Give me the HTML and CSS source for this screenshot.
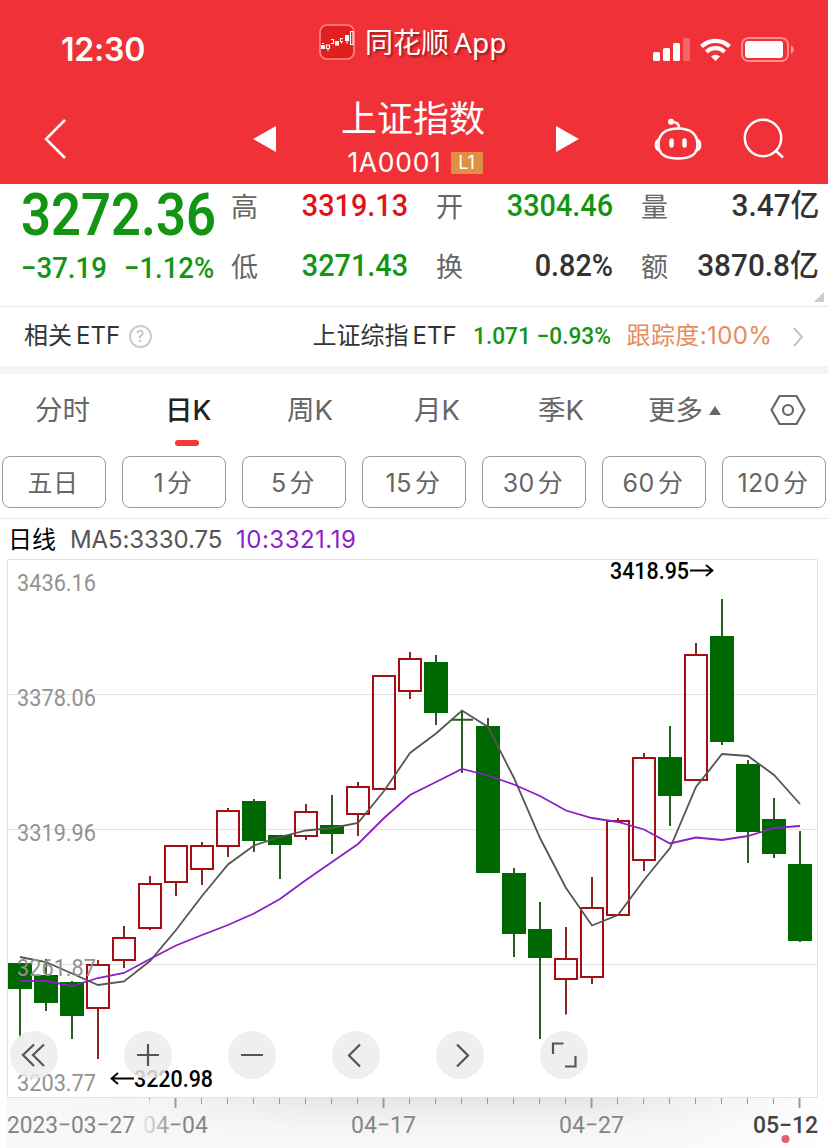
FILE: index.html
```html
<!DOCTYPE html>
<html lang="zh-CN">
<head>
    <meta charset="UTF-8">
    <meta name="viewport" content="width=device-width, initial-scale=1.0">
    <title>上证指数</title>
    <link rel="stylesheet" href="styles.css">
</head>
<body>
    <header>
        <div class="status-bar">
            <span class="time">12:30</span>
            <div class="brand">
                <svg width="36" height="36" viewBox="0 0 36 36">
                    <rect x="1" y="1" width="34" height="34" rx="7" fill="#e0201f" stroke="#ff8a85" stroke-width="1.600"/>
                    <path d="M2 21h4v4h-4zM16 17h4v4.500h-4zM26 11h4v6h-4z" fill="#fff"/>
                    <path d="M7.500 21h3v3.500h-3zM9 24.500v2.500M12 15.500h2.500v4H12M24 14.500h-2.500v3h2.500M22.500 17.500v2M28 17v2.500M31.500 7.500h2.500v13h-2.500zM3 19.500h2" fill="none" stroke="#fff" stroke-width="1.100"/>
                </svg>
                <span>同花顺<span class="app">App</span></span>
            </div>
            <svg class="signals" width="144" height="28" viewBox="0 0 144 28">
                <g fill="#fff">
                    <rect x="1" y="16" width="7" height="9" rx="1.500"/>
                    <rect x="11" y="12" width="7" height="13" rx="1.500"/>
                    <rect x="21" y="7" width="7" height="18" rx="1.500"/>
                    <rect x="31" y="2" width="7" height="23" rx="1.500" opacity=".25"/>
                    <path d="M63.500 25l-4.500-4.500a6.500 6.500 0 0 1 9 0z"/>
                    <rect x="93" y="5" width="38" height="17" rx="3"/>
                    <path d="M139 9.500c3.500 1 3.500 7 0 8z" opacity=".5"/>
                </g>
                <path d="M49.500 10.500a20 20 0 0 1 28 0M54.500 16a12.500 12.500 0 0 1 18 0" fill="none" stroke="#fff" stroke-width="4.200"/>
                <rect x="90" y="2" width="46" height="23" rx="6.500" fill="none" stroke="#fff" stroke-width="2" opacity=".45"/>
            </svg>
        </div>
        <div class="nav">
            <svg width="26" height="42" viewBox="0 0 26 42"><path d="M22 2L3 21l19 19" fill="none" stroke="#fff" stroke-width="2.500"/></svg>
            <svg width="24" height="26" viewBox="0 0 24 26"><path d="M0 13L23 0v26z" fill="#fff"/></svg>
            <div class="title">
                <h1>上证指数</h1>
                <p>1A0001<span class="level">L1</span></p>
            </div>
            <svg width="24" height="26" viewBox="0 0 24 26"><path d="M0 0v26l23-13z" fill="#fff"/></svg>
            <svg width="48" height="44" viewBox="0 0 48 44">
                <g fill="none" stroke="#fff" stroke-width="2.600">
                    <path d="M24 10.500c13 0 19.500 6 19.500 16 0 10.500-7 14-19.500 14s-19.500-3.500-19.500-14c0-10 6.500-16 19.500-16z"/>
                    <path d="M4.500 22c-3.500 2-3.500 8 0 10M43.500 22c3.500 2 3.500 8 0 10M25 10c0-4-2-6-7-6" stroke-linecap="round"/>
                </g>
                <circle cx="17" cy="3.800" r="3" fill="#fff"/>
                <path d="M17.500 22.500v5M30.500 22.500v5" stroke="#fff" stroke-width="4.400" stroke-linecap="round"/>
            </svg>
            <svg width="42" height="42" viewBox="0 0 42 42"><g fill="none" stroke="#fff" stroke-width="2.500"><circle cx="20" cy="20" r="18.200"/><path d="M33 33l7 6.500"/></g></svg>
        </div>
    </header>

    <section class="quote">
        <div class="price">
            <div class="last">3272.36</div>
            <div class="change"><span>−37.19</span><span>−1.12%</span></div>
        </div>
        <div class="cell"><label>高</label><b class="up">3319.13</b></div>
        <div class="cell"><label>开</label><b class="down">3304.46</b></div>
        <div class="cell"><label>量</label><b>3.47<i>亿</i></b></div>
        <div class="cell"><label>低</label><b class="down">3271.43</b></div>
        <div class="cell"><label>换</label><b>0.82%</b></div>
        <div class="cell"><label>额</label><b>3870.8<i>亿</i></b></div>
        <div class="corner"></div>
    </section>

    <section class="etf">
        <span class="etf-label">相关<em>ETF</em></span>
        <span class="help">?</span>
        <span class="etf-name">上证综指<em>ETF</em></span>
        <span class="etf-num">1.071 −0.93%</span>
        <span class="track">跟踪度:100%</span>
        <svg width="12" height="20" viewBox="0 0 12 20"><path d="M2 1l8 9-8 9" fill="none" stroke="#c4c4c4" stroke-width="2"/></svg>
    </section>

    <nav class="tabs">
        <span>分时</span>
        <span class="active">日K</span>
        <span>周K</span>
        <span>月K</span>
        <span>季K</span>
        <span class="more">更多<svg width="12" height="9" viewBox="0 0 12 9"><path d="M6 0l6 9H0z" fill="#666"/></svg></span>
        <svg width="36" height="32" viewBox="0 0 36 32"><g fill="none" stroke="#666" stroke-width="2.200"><path d="M9.500 2h17l8 14-8 14h-17l-8-14z" stroke-linejoin="round"/><circle cx="18" cy="16" r="5"/></g></svg>
    </nav>

    <div class="periods">
        <button>五日</button>
        <button>1<i>分</i></button>
        <button>5<i>分</i></button>
        <button>15<i>分</i></button>
        <button>30<i>分</i></button>
        <button>60<i>分</i></button>
        <button>120<i>分</i></button>
    </div>

    <div class="ma">
        <span class="line-name">日线</span>
        <span class="ma5">MA5:3330.75</span>
        <span class="ma10">10:3321.19</span>
    </div>

    <svg class="chart" width="828" height="589" viewBox="0 559 828 589">
        <defs>
            <linearGradient id="axisBg" x1="0" y1="0" x2="0" y2="1">
                <stop offset="0" stop-color="#e6e6e6"/>
                <stop offset=".6" stop-color="#f5f5f5"/>
                <stop offset="1" stop-color="#f8f8f8"/>
            </linearGradient>
            <linearGradient id="axisSide" x1="0" y1="0" x2="1" y2="0">
                <stop offset="0" stop-color="#f8f8f8"/>
                <stop offset=".15" stop-color="#f8f8f8" stop-opacity=".8"/>
                <stop offset=".4" stop-color="#f8f8f8" stop-opacity="0"/>
                <stop offset=".7" stop-color="#f8f8f8" stop-opacity="0"/>
                <stop offset="1" stop-color="#fff"/>
            </linearGradient>
            <linearGradient id="fade" x1="0" y1="0" x2="1" y2="0">
                <stop offset="0" stop-color="#f7f7f7"/>
                <stop offset="1" stop-color="#f7f7f7" stop-opacity=".2"/>
            </linearGradient>
        </defs>

        <!-- grid -->
        <path class="grid" d="M7.500 559.500H817.500V1097.500H7.500zM8 694.500H817M8 829.500H817M8 964.500H817"/>
        <rect x="7" y="1098" width="821" height="50" fill="url(#axisBg)"/>
        <rect x="7" y="1098" width="821" height="50" fill="url(#axisSide)"/>

        <!-- falling days -->
        <path class="wick-down" d="M20 963V1038M46 959V1011M72 981V1039M254 799V852M280 835V879M332 795V854M436 655V725M462 711V773M488 718V873M514 868V957M540 902V1039M670 726V826M722 599V745M748 760V863M774 798V858M800 831V942M451 719.700H473"/>
        <path class="body-down" d="M8 963h24v26h-24zM34 975h24v28h-24zM60 982h24v34h-24zM242 801h24v40h-24zM268 835h24v10h-24zM320 825h24v9h-24zM424 662h24v51h-24zM476 726h24v147h-24zM502 873h24v61h-24zM528 929h24v29h-24zM658 757h24v39h-24zM710 636h24v106h-24zM736 764h24v68h-24zM762 819h24v35h-24zM788 864h24v77h-24z"/>

        <!-- rising days -->
        <path class="wick-up" d="M98 960V965M98 1008V1059M124 926V938M124 960V968M150 876V884M150 928V930M176 882V896M202 842V846M202 869V885M228 808V811M228 846V857M306 804V812M306 836V840M358 782V787M358 814V836M410 652V659M410 691V699M566 927V959M566 979V1014.500M592 877V908M592 977V984M618 818V821M644 753V758M644 860V871M696 643V655"/>
        <path class="body-up" d="M87 965h22v43h-22zM113 938h22v22h-22zM139 884h22v44h-22zM165 846h22v36h-22zM191 846h22v23h-22zM217 811h22v35h-22zM295 812h22v24h-22zM347 787h22v27h-22zM373 676h22v113h-22zM399 659h22v32h-22zM555 959h22v20h-22zM581 908h22v69h-22zM607 821h22v94h-22zM633 758h22v102h-22zM685 655h22v125h-22z"/>

        <!-- moving averages -->
        <polyline class="avg5" points="20,957 46,962 72,973.5 98,985 124,981.5 150,961 176,930 202,896 228,864.5 254,845.5 280,837 306,830.5 332,828 358,823 384,791 410,753 436,733.5 462,710.5 488,727 514,778 540,838 566,888 592,925.5 618,915 644,880 670,848 696,787 722,754 748,756 774,775 800,804"/>
        <polyline class="avg10" points="20,981 46,981 72,986 98,978 124,973 150,959 176,945.5 202,935 228,925 254,913.5 280,899 306,880 332,862 358,844 384,818 410,795 436,782 462,769 488,775.5 514,784.5 540,796 566,810.5 592,818 618,822 644,829.5 670,843.5 696,837.5 722,840 748,836 774,828 800,826"/>

        <!-- price scale -->
        <g class="scale">
            <text x="17" y="591" textLength="79" lengthAdjust="spacingAndGlyphs">3436.16</text>
            <text x="17" y="706" textLength="79" lengthAdjust="spacingAndGlyphs">3378.06</text>
            <text x="17" y="841" textLength="79" lengthAdjust="spacingAndGlyphs">3319.96</text>
            <text x="17" y="976" textLength="79" lengthAdjust="spacingAndGlyphs">3261.87</text>
            <text x="17" y="1091" textLength="79" lengthAdjust="spacingAndGlyphs">3203.77</text>
        </g>

        <!-- high and low marks -->
        <g class="mark">
            <text x="610" y="579" textLength="79" lengthAdjust="spacingAndGlyphs">3418.95</text>
            <text x="134" y="1087" textLength="79" lengthAdjust="spacingAndGlyphs">3220.98</text>
            <path d="M690 570.500H712M706 565l6.500 5.500-6.500 5.500M134 1078.500H112M118 1073l-6.500 5.500 6.500 5.500"/>
        </g>

        <!-- date axis -->
        <path class="tick" d="M149.500 1098v6M201.500 1098v6M227.500 1098v6M253.500 1098v6M279.500 1098v6M305.500 1098v6M331.500 1098v6M357.500 1098v6M409.500 1098v6M435.500 1098v6M461.500 1098v6M487.500 1098v6M513.500 1098v6M539.500 1098v6M565.500 1098v6M617.500 1098v6M643.500 1098v6M669.500 1098v6M695.500 1098v6M721.500 1098v6M747.500 1098v6M773.500 1098v6"/>
        <path class="tick major" d="M175.500 1098v10M383.500 1098v10M591.500 1098v10M799.500 1098v10"/>
        <g class="dates">
            <text x="143" y="1133" textLength="65" lengthAdjust="spacingAndGlyphs">04−04</text>
            <text x="351" y="1133" textLength="65" lengthAdjust="spacingAndGlyphs">04−17</text>
            <text x="559" y="1133" textLength="65" lengthAdjust="spacingAndGlyphs">04−27</text>
            <text class="today" x="753" y="1133" textLength="65" lengthAdjust="spacingAndGlyphs">05−12</text>
            <rect x="138" y="1099" width="30" height="46" fill="url(#fade)"/>
            <text x="7" y="1133" textLength="128" lengthAdjust="spacingAndGlyphs">2023−03−27</text>
        </g>
        <circle cx="785.500" cy="1139" r="4" fill="#e36164"/>

        <!-- chart controls -->
        <g class="controls">
            <circle cx="34" cy="1055" r="24"/>
            <circle cx="148" cy="1055" r="24"/>
            <circle cx="252" cy="1055" r="24"/>
            <circle cx="356" cy="1055" r="24"/>
            <circle cx="460" cy="1055" r="24"/>
            <circle cx="564" cy="1055" r="24"/>
            <path d="M34 1044.500L23 1055l11 11M44 1044.500L33 1055l11 11M137 1055h22M148 1044v22M241 1055h22M360 1044.500L349 1055.500l11 11M457 1044.500l11 11-11 11M553 1054v-10.500h10.500M565 1066.500h10.500V1056"/>
        </g>
    </svg>
</body>
</html>
```

FILE: styles.css
```css
* {
    box-sizing: border-box;
}

body {
    margin: 0;
    width: 828px;
    height: 1148px;
    overflow: hidden;
    background-color: #fff;
    color: #333;
    font-family: Inter, "Noto Sans CJK SC", sans-serif;
}

svg {
    display: block;
    flex: none;
}

em, i {
    font-style: normal;
}

header {
    height: 184px;
    background-color: #f03238;
    color: #fff;
}

.status-bar {
    display: grid;
    grid-template-columns: 319px 333px 1fr;
    height: 92px;
}

.time {
    padding: 30px 0 0 61px;
    font-size: 32px;
    line-height: 40px;
    font-weight: 600;
    letter-spacing: -0.2px;
}

.brand {
    display: flex;
    gap: 10px;
    padding-top: 24px;
    font-size: 28px;
    line-height: 36px;
    font-weight: 400;
    text-shadow: 2px 2px 2px rgba(110, 10, 10, 0.6);
    white-space: nowrap;
}

.app {
    margin-left: 5px;
    font-family: "Noto Sans", sans-serif;
    font-weight: 400;
}

.signals {
    margin-top: 36px;
}

.nav {
    display: grid;
    grid-template-columns: 210px 71px 232px 98px 89px 1fr;
    height: 92px;
    padding-left: 43px;
}

.nav > svg {
    align-self: start;
    margin-top: 26px;
}

.nav > svg:nth-child(2), .nav > svg:nth-child(4) {
    margin-top: 34px;
}

.title {
    width: 180px;
    text-align: center;
}

h1 {
    margin: 2px 0 0 -2px;
    font-size: 36px;
    line-height: 50px;
    font-weight: 400;
}

.title p {
    display: flex;
    justify-content: center;
    align-items: center;
    gap: 9px;
    margin: 4px 0 0 2px;
    font-size: 26.5px;
    line-height: 28px;
    letter-spacing: 0.7px;
}

.level {
    width: 32px;
    margin-top: 2px;
    background-color: #e09040;
    font-size: 18px;
    line-height: 22px;
    letter-spacing: 0;
}

.quote {
    position: relative;
    display: grid;
    grid-template-columns: 181px 177px 177px 178px;
    grid-template-rows: 42px 42px;
    gap: 18px 28px;
    height: 123px;
    padding-left: 22px;
    border-bottom: 1px solid #e8e8e8;
}

.price {
    grid-row: span 2;
    color: #139513;
    font-family: Roboto, sans-serif;
    white-space: nowrap;
}

.last {
    width: max-content;
    margin-left: -1px;
    font-size: 59px;
    line-height: 62px;
    font-weight: 600;
    transform: scaleX(0.89);
    transform-origin: left;
}

.change {
    display: flex;
    gap: 18px;
    width: max-content;
    margin-left: -1px;
    font-size: 29px;
    line-height: 44px;
    font-weight: 500;
    transform: scaleX(0.95);
    transform-origin: left;
}

.cell {
    display: flex;
    justify-content: space-between;
    align-items: center;
}

.cell label {
    padding-top: 5px;
    color: #666;
    font-size: 27px;
    line-height: 42px;
    font-weight: 400;
}

.cell b {
    font-family: Roboto, "Noto Sans CJK SC", sans-serif;
    font-size: 32px;
    line-height: 42px;
    font-weight: 500;
    transform: scaleX(0.9);
    transform-origin: right;
}

.cell:nth-child(4) b, .cell:nth-child(7) b {
    transform: scaleX(0.93);
}

.cell i {
    font-size: 31px;
    line-height: 30px;
}

.cell .up {
    color: #e11215;
}

.cell .down {
    color: #139513;
}

.corner {
    position: absolute;
    right: 4px;
    bottom: 4px;
    border-left: 10px solid transparent;
    border-bottom: 10px solid #ccc;
}

.etf {
    display: flex;
    align-items: center;
    height: 67px;
    padding: 0 24px;
    border-bottom: 8px solid #f5f5f5;
    font-size: 24px;
    line-height: 34px;
    white-space: nowrap;
}

.etf em {
    margin-left: 4px;
}

.etf-label {
    width: 105px;
}

.etf-num {
    width: 154px;
    margin-bottom: 2px;
    color: #139513;
    font-family: Roboto, sans-serif;
    font-weight: 500;
    transform: scaleX(0.945);
    transform-origin: left;
}

.help {
    width: 23px;
    height: 23px;
    border: 2px solid #ccc;
    border-radius: 50%;
    color: #bbb;
    font-size: 16px;
    line-height: 19px;
    text-align: center;
}

.etf-name {
    width: 161px;
    margin-left: 161px;
}

.track {
    width: 166px;
    color: #e88b5c;
    letter-spacing: 0.4px;
}

.etf-label, .etf-name, .track {
    margin-bottom: 1px;
}

.tabs {
    display: grid;
    grid-template-columns: 130px 122px 127px 124px 110px 123px 1fr;
    align-items: center;
    height: 82px;
    padding: 0 0 10px 35px;
    color: #666;
    font-size: 27.5px;
    line-height: 72px;
}

.tabs .active {
    position: relative;
    color: #222;
    font-weight: 500;
}

.active::after {
    content: "";
    position: absolute;
    left: 10px;
    bottom: 0;
    width: 24px;
    height: 6px;
    border-radius: 3px;
    background-color: #f23a33;
}

.more {
    display: flex;
    align-items: center;
    gap: 6px;
}

.tabs > svg {
    margin-left: -1px;
}

.periods {
    display: flex;
    gap: 16px;
    height: 63px;
    padding: 0 2px;
    border-bottom: 1px solid #e8e8e8;
}

.periods button {
    width: 104px;
    height: 52px;
    padding: 0 2px 3px 0;
    border: 1px solid #999;
    border-radius: 8px;
    background-color: #fff;
    color: #666;
    font-family: inherit;
    font-size: 25px;
    letter-spacing: 0.5px;
}

.periods i {
    margin-left: 3px;
}

.ma {
    display: flex;
    align-items: center;
    height: 40px;
    padding-left: 8px;
    font-size: 24px;
}

.line-name {
    width: 62px;
    margin-bottom: 4px;
    color: #000;
}

.ma5 {
    width: 166px;
    color: #555;
    letter-spacing: -0.1px;
}

.ma10 {
    color: #8a1fcc;
    letter-spacing: 0.5px;
}

.grid {
    fill: none;
    stroke: #e2e2e2;
}

.wick-down, .wick-up {
    fill: none;
    stroke: #285f20;
    stroke-width: 2;
}

.wick-up {
    stroke: #8a2724;
}

.body-down {
    fill: #006800;
}

.body-up {
    fill: none;
    stroke: #a60f12;
    stroke-width: 2;
}

.avg5, .avg10 {
    fill: none;
    stroke: #555;
    stroke-width: 1.8;
}

.avg10 {
    stroke: #8a1fc4;
}

.chart text {
    font-family: Roboto, sans-serif;
    font-size: 23px;
}

.scale {
    fill: #929292;
}

.mark text {
    fill: #000;
    font-weight: 500;
}

.mark path {
    fill: none;
    stroke: #000;
    stroke-width: 1.8;
}

.tick {
    stroke: #999;
}

.major {
    stroke-width: 2;
}

.chart .dates text {
    fill: #858585;
    font-size: 24px;
}

.chart .dates .today {
    fill: #444;
    font-weight: 500;
}

.controls circle {
    fill: #ececec;
    fill-opacity: 0.85;
}

.controls path {
    fill: none;
    stroke: #555;
    stroke-width: 2.2;
}
```
